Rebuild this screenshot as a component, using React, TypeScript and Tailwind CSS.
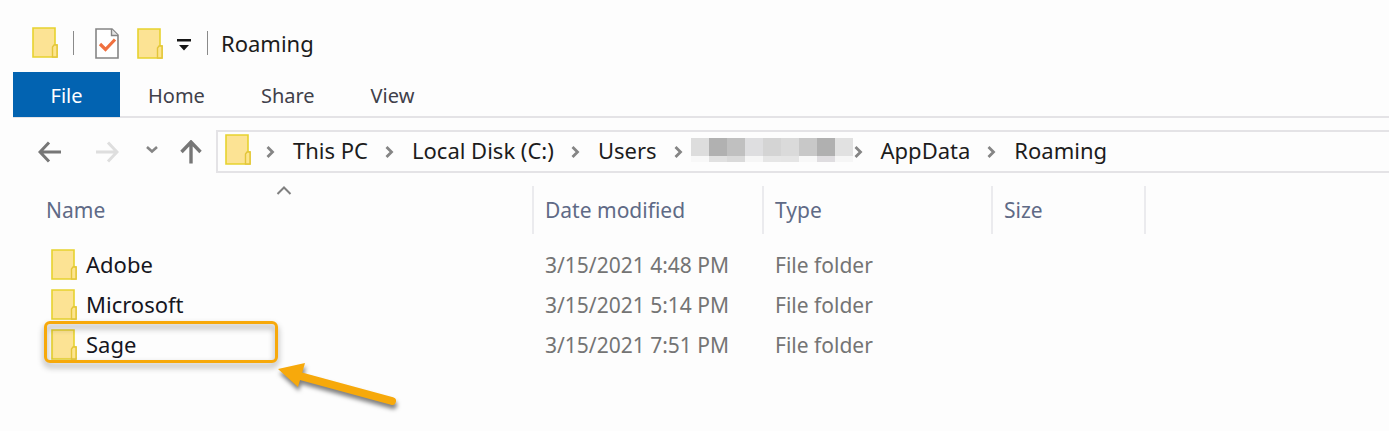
import React from 'react';

const folders = [
    { name: 'Adobe', modified: '3/15/2021 4:48 PM', type: 'File folder' },
    { name: 'Microsoft', modified: '3/15/2021 5:14 PM', type: 'File folder' },
    { name: 'Sage', modified: '3/15/2021 7:51 PM', type: 'File folder', highlighted: true },
];

const tabs = ['Home', 'Share', 'View'];

// pixelated user name: top row is tall, bottom row is the faint remainder
const blocks = [
    { top: 'bg-[#dddddd]', bottom: 'bg-[#f8f8f8]' },
    { top: 'bg-[#b1b1b1]', bottom: 'bg-[#e1e1e1]' },
    { top: 'bg-[#c0c0c0]', bottom: 'bg-[#dadada]' },
    { top: 'bg-[#dedee0]', bottom: 'bg-[#f6f6f6]' },
    { top: 'bg-[#d4d4d4]', bottom: 'bg-[#e6e6e6]' },
    { top: 'bg-[#dadada]', bottom: 'bg-[#e5e5e5]' },
    { top: 'bg-[#c8c8c8]', bottom: 'bg-[#f8f8f8]' },
    { top: 'bg-[#b0b0b0]', bottom: 'bg-[#dfdde0]' },
    { top: 'bg-[#e1e1e1]', bottom: 'bg-[#f6f6f6]' },
];

const FolderIcon = () => (
    <svg className="shrink-0" width="26" height="31" viewBox="0 0 26 31" fill="none">
        <path d="M1 1h22v17h2v12H1z" fill="#fce394" stroke="#e6d22e" strokeWidth="1.6" />
        <path d="M20.5 30V20l1.500-2h3v12z" fill="#fde58e" stroke="#e3c53a" strokeWidth="1.4" />
    </svg>
);

const PropertiesIcon = () => (
    <svg width="24" height="31" viewBox="0 0 24 31" fill="none">
        <path d="M1 1h16l6 6v23H1z" fill="#fff" stroke="#858585" strokeWidth="1.6" />
        <path d="M16.500 1v6.500H23" fill="#e4e4e4" stroke="#858585" strokeWidth="1.4" />
        <path d="M5 16l5.500 5.500L20 11.500" stroke="#f0703f" strokeWidth="3.2" />
    </svg>
);

const ArrowLeft = () => (
    <svg width="24" height="22" viewBox="0 0 24 22" fill="none" stroke="currentColor" strokeWidth="3">
        <path d="M23 11H2M11 1.500L2 11l9 9.500" />
    </svg>
);

const Crumb = ({ label }: { label: string }) => (
    <a href="#" className="text-[#1c1c1c]">
        {label}
    </a>
);

const Separator = () => (
    <svg className="mt-1 shrink-0" width="10" height="14" viewBox="0 0 10 14" fill="none">
        <path d="M1.500 2L6.500 7l-5 5" stroke="#858585" strokeWidth="2.8" />
    </svg>
);

const TitleBar = () => (
    <div className="flex h-[72px] items-center pt-3.5 pl-8 text-[22px]">
        <button aria-label="Folder menu" className="pb-0.5">
            <FolderIcon />
        </button>
        <div className="ml-[15px] h-6 w-px bg-[#8a8a8a]" />
        <button aria-label="Properties" className="ml-[21px]">
            <PropertiesIcon />
        </button>
        <button aria-label="New folder" className="ml-[18px]">
            <FolderIcon />
        </button>
        <button aria-label="Customize toolbar" className="ml-[13px] pt-1">
            <svg width="16" height="14" viewBox="0 0 16 14" fill="#161616">
                <path d="M1 1h14v2.500H1zM3 7h10l-5 5.500z" />
            </svg>
        </button>
        <div className="mr-[13px] ml-[15px] h-6 w-px bg-[#8a8a8a]" />
        <h1 className="text-[#1c1c1c]">Roaming</h1>
    </div>
);

const Ribbon = () => (
    <nav className="ml-[13px] flex h-[46px] border-b-2 border-[#e4e3e6] text-xl text-[#40404a]">
        <button className="-mb-0.5 h-[45px] w-[107px] bg-[#0263b1] pt-0.5 text-white">File</button>
        {tabs.map((tab) => (
            <button key={tab} className="px-7 pt-1">
                {tab}
            </button>
        ))}
    </nav>
);

const AddressBar = () => (
    <div className="mt-3 flex h-[43px] items-center pl-[38px] text-[22px]">
        <button aria-label="Back" className="text-[#777777]">
            <ArrowLeft />
        </button>
        <button aria-label="Forward" className="ml-[33px] rotate-180 text-[#dedede]">
            <ArrowLeft />
        </button>
        <button aria-label="Recent locations" className="ml-[27px] pb-1">
            <svg width="12" height="8" viewBox="0 0 12 8" fill="none">
                <path d="M1 1l5 4.500L11 1" stroke="#858585" strokeWidth="2.6" />
            </svg>
        </button>
        <button aria-label="Up" className="ml-[22px]">
            <svg width="22" height="24" viewBox="0 0 22 24" fill="none">
                <path d="M11 23.500V2M1.500 12L11 2l9.500 10" stroke="#777777" strokeWidth="3.4" />
            </svg>
        </button>
        <div className="ml-[14px] flex h-full flex-1 items-center border-2 border-r-0 border-[#e4e3e6] pb-1 pl-[7px]">
            <FolderIcon />
            <div className="ml-[15px] flex items-center gap-[17px]">
                <Separator />
                <Crumb label="This PC" />
                <Separator />
                <Crumb label="Local Disk (C:)" />
                <Separator />
                <Crumb label="Users" />
                <Separator />
                <div className="-mr-4 -ml-2.5 flex">
                    {blocks.map((block, i) => (
                        <div key={i} className="w-[18px]">
                            <div className={`h-[18px] ${block.top}`} />
                            <div className={`h-1.5 ${block.bottom}`} />
                        </div>
                    ))}
                </div>
                <Separator />
                <Crumb label="AppData" />
                <Separator />
                <Crumb label="Roaming" />
            </div>
        </div>
    </div>
);

const Pointer = () => (
    <svg
        className="absolute top-9 left-[276px] drop-shadow-[1px_4px_2px_rgba(0,0,0,0.5)]"
        width="124"
        height="50"
        viewBox="0 0 124 50"
    >
        <path d="M24 15L116 40" stroke="#f7a90b" strokeWidth="8" strokeLinecap="round" />
        <path d="M2 8l27-6-7 24z" fill="#f7a90b" />
    </svg>
);

const FileTable = () => (
    <table className="mt-[13px] w-full table-fixed border-separate border-spacing-0 text-left">
        <colgroup>
            <col className="w-[532px]" />
            <col className="w-[230px]" />
            <col className="w-[229px]" />
            <col className="w-[153px]" />
            <col />
        </colgroup>
        <thead>
            <tr className="h-12 text-[#5f6a86]">
                <th className="relative pl-[46px] font-normal">
                    Name
                    <svg
                        className="absolute top-0 left-[276px]"
                        width="16"
                        height="9"
                        viewBox="0 0 16 9"
                        fill="none"
                    >
                        <path d="M1.500 8L8 1.500 14.500 8" stroke="#808080" strokeWidth="2" />
                    </svg>
                </th>
                <th className="border-l-2 border-[#ebebee] pl-[11px] font-normal">Date modified</th>
                <th className="border-l-2 border-[#ebebee] pl-[11px] font-normal">Type</th>
                <th className="border-l-2 border-[#ebebee] pl-[11px] font-normal">Size</th>
                <td className="border-l-2 border-[#ebebee]" />
            </tr>
        </thead>
        <tbody className="text-[#747474] before:block before:h-[11px]">
            {folders.map((folder) => (
                <tr key={folder.name} className="h-10">
                    <td className="relative pb-0.5 pl-[51px] text-[22px] text-[#16161e]">
                        <div className="flex items-center gap-[9px]">
                            <FolderIcon />
                            {folder.name}
                        </div>
                        {folder.highlighted && (
                            <>
                                <div className="absolute -top-1 left-11 h-[42px] w-[234px] rounded-md border-3 border-[#f7a90b] drop-shadow-[0_4px_3px_rgba(0,0,0,0.4)]" />
                                <Pointer />
                            </>
                        )}
                    </td>
                    <td className="pl-[13px]">{folder.modified}</td>
                    <td className="pl-[13px]">{folder.type}</td>
                </tr>
            ))}
        </tbody>
    </table>
);

const App = () => {
    return (
        <main className="min-h-screen overflow-hidden bg-[#fdfdfd] font-['Noto_Sans','Open_Sans',sans-serif] text-[21px] leading-7 whitespace-nowrap">
            <TitleBar />
            <Ribbon />
            <AddressBar />
            <FileTable />
        </main>
    );
};

export default App;
